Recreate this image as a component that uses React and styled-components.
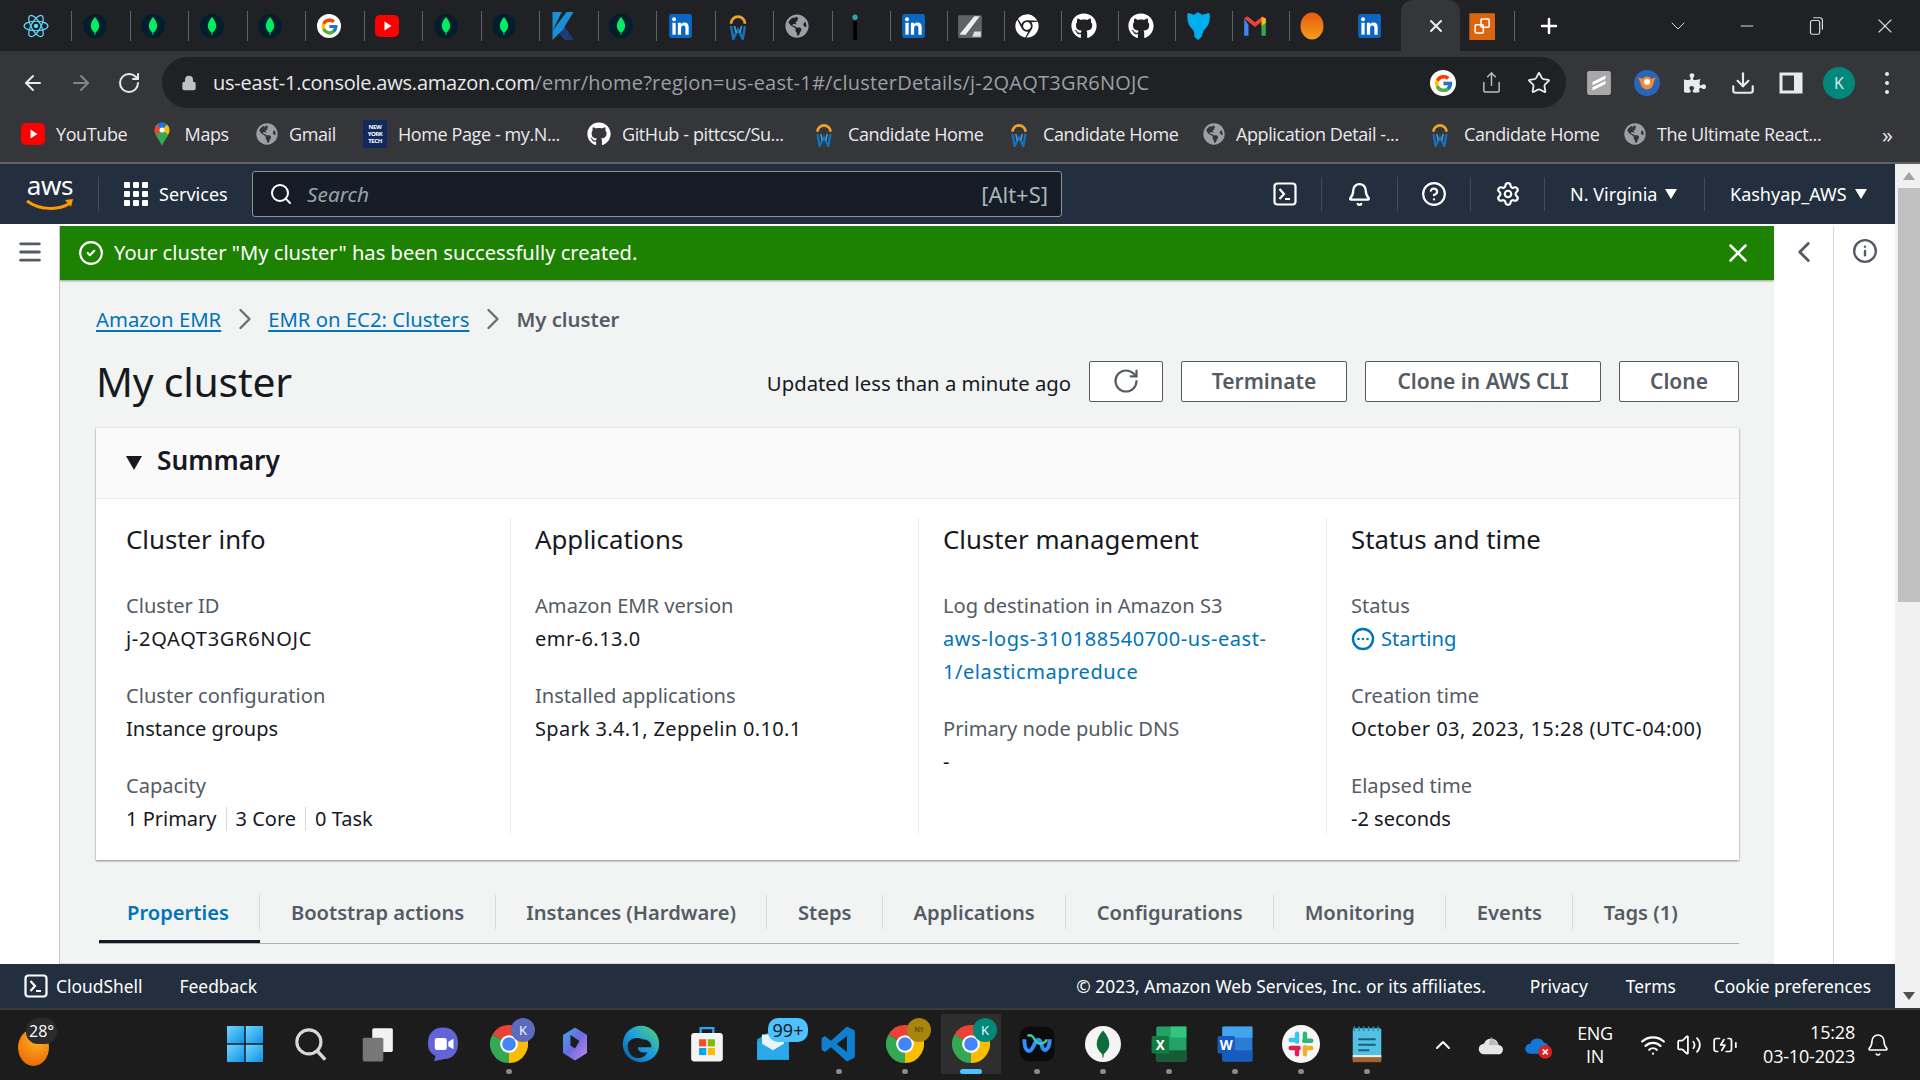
import React from "react";
import styled, { createGlobalStyle } from "styled-components";
import {
  ArrowLeft, ArrowRight, RotateCw, Lock, Star, Share, Download, Search, Bell, CircleHelp,
  Settings, ChevronLeft, ChevronRight, ChevronDown, Info, Menu, X, Plus, Minus, CircleCheck,
  Wifi, Volume2, ChevronUp, BatteryCharging,
} from "lucide-react";
import { FaGithub, FaGlobeAmericas, FaPuzzlePiece, FaChrome } from "react-icons/fa";
import { FcGoogle } from "react-icons/fc";

const Global = createGlobalStyle`
  html, body { margin: 0; padding: 0; width: 1920px; height: 1080px; overflow: hidden; }
  body { font-family: "Roboto", "Liberation Sans", sans-serif; }
  * { box-sizing: border-box; }
`;
const chromeFont = `"Open Sans", "Noto Sans", sans-serif`;
const emberFont = `"Noto Sans", "Open Sans", sans-serif`;

const Page = styled.div`width:1920px;height:1080px;display:flex;flex-direction:column;background:#202124;overflow:hidden;`;

/* tab strip */
const TabStrip = styled.div`height:51px;display:flex;align-items:flex-end;padding-left:13.5px;background:#202124;flex:none;`;
const Tab = styled.div`
  width:${p => p.$w}px;height:51px;display:flex;align-items:center;justify-content:center;padding-right:13px;
  position:relative;flex:none;
  &::after{content:"";position:absolute;right:0;top:11px;height:30px;width:1px;background:${p => p.$sep ? "#5f6368" : "transparent"};}
`;
const ActiveTab = styled.div`
  width:59px;height:51px;margin-left:-3px;padding-left:10px;background:#35363a;border-radius:12px 12px 0 0;display:flex;align-items:center;justify-content:center;color:#e8eaed;flex:none;
`;
const NewTab = styled.div`width:68px;display:flex;align-items:center;justify-content:center;color:#fff;height:51px;`;
const WinControls = styled.div`margin-left:auto;display:flex;height:51px;padding-right:1px;`;
const WinBtn = styled.div`width:69px;display:flex;align-items:center;justify-content:center;color:#dadce0;`;

/* toolbar */
const Toolbar = styled.div`height:64px;background:#35363a;display:flex;align-items:flex-start;padding:6px 0 0 9px;flex:none;`;
const ToolBtn = styled.div`width:48px;height:51px;display:flex;align-items:center;justify-content:center;color:${p => p.$dim ? "#80868b" : "#e8eaed"};flex:none;`;
const Address = styled.div`width:1404px;height:51px;margin:0 9px;background:#202124;border-radius:26px;display:flex;align-items:center;padding:0 3px 0 19px;flex:none;`;
const Url = styled.div`font:20px ${chromeFont};color:#9aa0a6;margin-left:16px;white-space:nowrap;letter-spacing:.23px;`;
const Host = styled.span`color:#e8eaed;letter-spacing:-.22px;`;
const AddressEnd = styled.div`margin-left:auto;display:flex;`;
const Avatar = styled.div`width:32px;height:32px;border-radius:50%;background:#00897b;color:#e8eaed;font:16px ${chromeFont};display:flex;align-items:center;justify-content:center;`;
const Dots = styled.div`display:flex;flex-direction:column;gap:5px;`;
const Dot = styled.i`width:4px;height:4px;border-radius:50%;background:#e8eaed;display:block;`;

/* bookmarks */
const Bookmarks = styled.div`height:47px;background:#35363a;display:flex;align-items:center;padding-left:21px;flex:none;padding-bottom:9px;`;
const Bookmark = styled.div`width:${p => p.$w}px;flex:none;display:flex;align-items:center;gap:11px;font:18px ${chromeFont};color:#e8eaed;white-space:nowrap;letter-spacing:-.4px;`;
const More = styled.div`margin-left:auto;margin-right:27px;color:#e8eaed;font:22px ${chromeFont};`;
const ChromeLine = styled.div`height:2px;background:#5f6368;flex:none;`;

/* console */
const Console = styled.div`flex:1;display:flex;min-height:0;background:#fff;`;
const ConsoleMain = styled.div`width:1895px;display:flex;flex-direction:column;`;
const Nav = styled.div`height:60px;background:#232f3e;display:flex;align-items:center;flex:none;color:#fff;font:18px ${emberFont};margin-bottom:2px;`;
const LogoWrap = styled.div`width:98px;padding-left:26px;flex:none;height:60px;display:flex;align-items:center;`;
const NavSep = styled.div`width:1px;height:34px;background:#414d5c;flex:none;`;
const Services = styled.div`display:flex;align-items:center;gap:11px;padding-left:25px;width:153px;flex:none;`;
const Grid9 = styled.div`display:grid;grid-template-columns:repeat(3,6px);gap:3px;`;
const Cell9 = styled.i`width:6px;height:6px;background:#fff;border-radius:1px;display:block;`;
const SearchBox = styled.div`width:810px;height:46px;background:#161d26;border:1px solid #879596;border-radius:3px;display:flex;align-items:center;padding:0 13px 0 16px;color:#d5dbdb;flex:none;`;
const SearchPh = styled.div`font:italic 20.8px ${emberFont};color:#95a5a6;margin-left:14px;`;
const SearchKey = styled.div`margin-left:auto;font:22px ${emberFont};color:#aab7b8;`;
const NavRight = styled.div`margin-left:auto;display:flex;align-items:center;`;
const NavCell = styled.div`width:${p => p.$w}px;height:34px;display:flex;align-items:center;justify-content:${p => p.$text ? "flex-start" : "center"};padding-left:${p => p.$text ? "25px" : "0"};gap:8px;border-right:${p => p.$last ? "0" : "1px solid #414d5c"};flex:none;white-space:nowrap;`;
const Caret = styled.i`width:0;height:0;border-left:6px solid transparent;border-right:6px solid transparent;border-top:10px solid #fff;display:block;`;

const Layout = styled.div`flex:1;min-height:0;display:flex;overflow:hidden;`;
const Rail = styled.div`width:${p => p.$w}px;flex:none;background:#fff;border-right:${p => p.$line ? "1px solid #d5dbdb" : "0"};display:flex;justify-content:center;padding-top:${p => p.$top}px;color:${p => p.$c};`;
const Middle = styled.div`flex:1;min-width:0;background:#f2f3f3;display:flex;flex-direction:column;overflow:hidden;border-left:1px solid #c5cbcc;border-bottom:1px solid #d5dbdb;margin-left:-1px;`;
const Flash = styled.div`height:54px;background:#1d8102;color:#fff;display:flex;align-items:center;padding:0 21px 0 18px;gap:10px;font:20.15px ${emberFont};flex:none;box-shadow:0 1px 2px rgba(0,28,36,.4);`;
const FlashText = styled.div`flex:1;padding-bottom:2px;`;
const Content = styled.div`padding:24px 35px 0 36px;`;
const Crumbs = styled.div`height:32px;display:flex;align-items:center;font:20.3px ${emberFont};color:#687078;padding-bottom:2px;`;
const Crumb = styled.a`color:#0073bb;text-decoration:underline;text-underline-offset:3px;`;
const CrumbNow = styled.span`font-weight:600;color:#545b64;`;
const CrumbSep = styled.span`display:flex;width:47px;justify-content:center;color:#687078;`;
const TitleRow = styled.div`margin-top:25px;height:41px;display:flex;align-items:center;`;
const Title = styled.h1`margin:0;font:400 40.8px ${emberFont};color:#16191f;flex:1;letter-spacing:-.2px;padding-bottom:2px;`;
const Updated = styled.div`font:20.3px ${emberFont};color:#16191f;margin-right:18px;padding-top:2px;`;
const Btn = styled.button`
  width:${p => p.$w}px;height:41px;margin-left:${p => p.$ml || 0}px;background:#fff;border:1px solid #545b64;border-radius:2px;color:#545b64;
  font:600 21px ${emberFont};display:flex;align-items:center;justify-content:center;padding:0 0 1px;flex:none;
`;
const Card = styled.section`margin-top:26px;background:#fff;box-shadow:0 1px 2px rgba(0,28,36,.45),0 0 1px rgba(0,28,36,.2);`;
const CardHead = styled.div`height:71px;background:#fafafa;border-bottom:1px solid #eaeded;display:flex;align-items:center;padding:0 0 0 30px;gap:15px;`;
const Tri = styled.i`width:0;height:0;border-left:8px solid transparent;border-right:8px solid transparent;border-top:14px solid #16191f;display:block;`;
const CardTitle = styled.h2`margin:0;font:600 26.3px ${emberFont};color:#16191f;padding-bottom:6px;`;
const CardBody = styled.div`display:grid;grid-template-columns:384px 408px 408px 1fr;padding:19px 30px 25px;`;
const Col = styled.div`padding-left:${p => p.$first ? 0 : 24}px;border-left:${p => p.$first ? 0 : "1px solid #eaeded"};`;
const ColTitle = styled.h3`margin:0 0 29px;font:400 25.8px/42px ${emberFont};color:#16191f;`;
const Field = styled.div`margin-bottom:24px;&:last-child{margin-bottom:0;}`;
const Label = styled.div`font:20.1px/33px ${emberFont};color:#545b64;`;
const Value = styled.div`font:20px/33px ${emberFont};color:#16191f;display:flex;align-items:center;min-height:33px;letter-spacing:${p => p.$ls || 0}px;`;
const Link = styled.div`font:20px/33px ${emberFont};color:#0073bb;max-width:350px;letter-spacing:.57px;`;
const Status = styled.div`font:20.2px/33px ${emberFont};color:#0073bb;display:flex;align-items:center;gap:6px;`;
const Capacity = styled.span`padding-right:9px;margin-right:9px;border-right:1px solid #d5dbdb;line-height:24px;&:last-child{border:0;}`;
const Tabs = styled.div`margin:21px 0 0 3px;height:63px;display:flex;border-bottom:1px solid #aab7b8;`;
const TabItem = styled.div`height:62px;display:flex;align-items:center;border-bottom:${p => p.$active ? "3px solid #16191f" : "0"};padding-top:${p => p.$active ? "3px" : 0};`;
const TabLabel = styled.div`font:600 20.15px/34px ${emberFont};color:${p => p.$active ? "#0073bb" : "#545b64"};padding:0 30.5px 0 ${p => p.$active ? 28 : 30.5}px;border-right:${p => p.$last ? 0 : "1px solid #d5dbdb"};white-space:nowrap;`;

const Footer = styled.div`height:44px;background:#232f3e;color:#fff;display:flex;align-items:center;padding:0 24px;font:17.4px ${emberFont};flex:none;`;
const FootLink = styled.span`margin-left:${p => p.$ml}px;white-space:nowrap;`;
const FootRight = styled.div`margin-left:auto;display:flex;`;

const Scroll = styled.div`width:25px;background:#f1f1f1;flex:none;display:flex;flex-direction:column;align-items:flex-end;`;
const ScrollArrow = styled.div`height:24px;width:22px;flex:none;display:flex;align-items:center;justify-content:center;`;
const ScrollTri = styled.i`width:0;height:0;border-left:6px solid transparent;border-right:6px solid transparent;${p => p.$up ? "border-bottom:8px solid #a3a3a3;" : "border-top:8px solid #505050;"}display:block;`;
const Thumb = styled.div`width:22px;height:414px;background:#c1c1c1;`;
const Spacer = styled.div`flex:1;`;

/* taskbar */
const Taskbar = styled.div`height:72px;background:#1c1c1c;border-top:2px solid #3a3a3a;display:flex;align-items:center;flex:none;color:#fff;font:18px ${chromeFont};`;
const Weather = styled.div`width:212px;flex:none;padding-left:18px;position:relative;height:50px;display:flex;align-items:center;`;
const WeatherBall = styled.div`width:31px;height:37px;border-radius:50%;background:radial-gradient(circle at 60% 30%,#ffb020,#e65c00);margin-top:4px;`;
const WeatherBadge = styled.div`position:absolute;left:26px;top:-2px;padding:0 3px;height:26px;border-radius:12px;background:#2b2b2b;font:16px/26px ${chromeFont};`;
const Apps = styled.div`display:flex;height:100%;`;
const AppCell = styled.div`
  width:66px;height:100%;display:flex;flex-direction:column;align-items:center;justify-content:center;position:relative;padding-bottom:2px;
  background:${p => p.$active ? "linear-gradient(#2e2e2e,#2e2e2e) center 4px / 60px 60px no-repeat" : "none"};
`;
const AppMark = styled.i`position:absolute;bottom:6px;left:50%;transform:translateX(-50%);height:5px;width:${p => p.$active ? 22 : 6}px;border-radius:3px;background:${p => p.$active ? "#4cc2ff" : "#8a8a8a"};display:block;`;
const AppBadge = styled.div`position:absolute;top:${p => p.$top || 8}px;left:${p => p.$left}px;min-width:${p => p.$size || 40}px;height:${p => p.$size || 24}px;border-radius:${p => p.$size ? "50%" : "10px"};background:${p => p.$bg};color:${p => p.$c || "#fff"};font:${p => p.$fs || 14}px/${p => p.$size || 24}px ${chromeFont};text-align:center;`;
const Tray = styled.div`display:flex;align-items:center;margin-left:19px;height:100%;`;
const TrayIcon = styled.div`width:${p => p.$w}px;display:flex;justify-content:center;flex:none;color:#fff;`;
const Lang = styled.div`width:64px;margin-right:8px;text-align:center;font:18px/23px ${chromeFont};flex:none;letter-spacing:-.3px;`;
const Clock = styled.div`width:106px;text-align:right;font:18px/24px ${chromeFont};margin-left:6px;flex:none;letter-spacing:-.2px;padding-bottom:2px;`;

/* icon drawings */
const Svg = ({ s = 24, children, vb = "0 0 24 24" }) => <svg width={s} height={s} viewBox={vb}>{children}</svg>;
const ReactLogo = () => (
  <Svg s={26}><g fill="none" stroke="#61dafb" strokeWidth="1.1"><ellipse cx="12" cy="12" rx="11" ry="4.4" /><ellipse cx="12" cy="12" rx="11" ry="4.4" transform="rotate(60 12 12)" /><ellipse cx="12" cy="12" rx="11" ry="4.4" transform="rotate(120 12 12)" /></g><circle cx="12" cy="12" r="2" fill="#61dafb" /></Svg>
);
const Mongo = ({ s = 24, bg = "#001e2b", c = "#00ed64" }) => (
  <Svg s={s}><circle cx="12" cy="12" r="12" fill={bg} /><path d="M12 3c2.6 3 4.2 5.8 4.2 9 0 3.2-2.2 5.4-3.6 6.6l-.4 2.6h-.5l-.3-2.6C10 17.400 7.800 15.200 7.800 12c0-3.200 1.600-6 4.200-9z" fill={c} /></Svg>
);
const YT = ({ s = 24 }) => (
  <Svg s={s}><rect x="0" y="1" width="24" height="22" rx="5" fill="#f00" /><path d="M9.500 7.500l7 4.500-7 4.500z" fill="#fff" /></Svg>
);
const GoogleRound = ({ s = 24 }) => (
  <svg width={s} height={s} viewBox="0 0 24 24"><circle cx="12" cy="12" r="12" fill="#fff" /><foreignObject x="2.500" y="2.500" width="19" height="19"><FcGoogle size={19} /></foreignObject></svg>
);
const KLogo = () => (
  <Svg s={28}><path d="M3 0h8L3 16z" fill="#1a8fd6" /><path d="M15 0L3 16v8l6-6 5 6h7L13 13l8-13z" fill="#1a8fd6" /><path d="M9 18l5-5 7 11h-7z" fill="#1f3a7a" /></Svg>
);
const LinkedIn = () => (
  <Svg s={26} ><rect x="2" y="1" width="21" height="22" rx="2" fill="#0a66c2" /><rect x="5" y="9" width="3" height="11" fill="#fff" /><circle cx="6.500" cy="5.800" r="1.800" fill="#fff" /><path d="M10 9h3v1.600c.7-1.200 1.800-1.800 3.200-1.800 2.600 0 3.800 1.600 3.800 4.400V20h-3v-6c0-1.600-.6-2.500-1.900-2.500S13 12.500 13 14v6h-3z" fill="#fff" /></Svg>
);
const Workday = ({ s = 26 }) => (
  <Svg s={s}><path d="M6 10a6 6 0 0 1 12 0" fill="none" stroke="#f0a12b" strokeWidth="2.400" /><path d="M6 12l2 11 4-8 4 8 2-11" fill="none" stroke="#1471b8" strokeWidth="2.200" /><path d="M9 12l1.500 6M15 12l-1.500 6" stroke="#4a9bd4" strokeWidth="1.400" /></Svg>
);
const Globe = ({ s = 22 }) => <FaGlobeAmericas size={s} color="#9aa0a6" />;
const IBar = () => (
  <Svg s={28}><circle cx="12" cy="4.500" r="2.300" fill="#2aa4ad" /><rect x="10.500" y="8" width="3.200" height="18" fill="#000" /></Svg>
);
const Pen = () => (
  <Svg s={26}><rect x="1" y="2" width="22" height="21" rx="1" fill="#5f6368" /><path d="M3 19L16 3h5L8 20H3z" fill="#eee" /><path d="M16 17h6v5h-8z" fill="#ddd" /></Svg>
);
const Barclays = () => (
  <Svg s={28}><path d="M12 0c1 1.500 3 1 3.500 2.500C18 1.500 20 1 22 1c.6 5-.4 9.500-3 12.500-1 1.200-2.200 2-2.600 3.500l-1.400 4.500-3 2.500-3-2.500L8.600 17c-.4-1.500-1.600-2.300-2.600-3.500C3.400 10.500 2.400 6 3 1c2 0 4 .5 5.500 1.500C9 1 11 1.500 12 0z" fill="#00aeef" /></Svg>
);
const Gmail = () => (
  <Svg s={26}><path d="M2 5v16h4V11z" fill="#4285f4" /><path d="M22 5v16h-4V11z" fill="#34a853" /><path d="M2 5l10 8 10-8-3-2-7 5.500L5 3z" fill="#ea4335" /><path d="M18 4l4 1v4l-4 3z" fill="#fbbc04" /></Svg>
);
const OrangeBall = () => <svg width="24" height="28" viewBox="0 0 24 28"><defs><linearGradient id="ob" x1="0" y1="0" x2="0" y2="1"><stop offset="0" stopColor="#e8590c" /><stop offset="1" stopColor="#f59f1a" /></linearGradient></defs><ellipse cx="12" cy="14" rx="11.500" ry="13.500" fill="url(#ob)" /></svg>;
const AwsTab = () => (
  <Svg s={28}><rect x="2" y="1" width="22" height="24" rx="1" fill="#d9660f" /><g fill="none" stroke="#fff" strokeWidth="1.300"><rect x="12" y="6" width="7" height="7" rx="1" /><rect x="7" y="11" width="7" height="7" rx="1" /></g></Svg>
);
const Restore = () => (
  <Svg s={22}><g fill="none" stroke="#dadce0" strokeWidth="1.300"><rect x="6" y="6" width="10" height="15" rx="2" /><path d="M9 3h7a3 3 0 0 1 3 3v10" /></g></Svg>
);
const AwsLogo = () => (
  <svg width="48" height="60" viewBox="0 0 48 60">
    <text x="24" y="31" textAnchor="middle" fontFamily="Noto Sans, sans-serif" fontSize="26" fill="#fff" letterSpacing="-.4">aws</text>
    <path d="M1 37c12 9 32 10 43 2" fill="none" stroke="#f90" strokeWidth="3" /><path d="M39 36l8-1-2 8z" fill="#f90" />
  </svg>
);
const Term = ({ s = 24 }) => (
  <svg width={s} height={s} viewBox="0 0 24 24"><rect x="1.500" y="1.500" width="21" height="21" rx="3" fill="none" stroke="#fff" strokeWidth="2.200" /><path d="M6.500 7l4.500 5-4.500 5M12 17h5" fill="none" stroke="#fff" strokeWidth="2.200" /></svg>
);
const Chrome = ({ s = 38 }) => (
  <Svg s={s}><path d="M12 12L1.600 6A12 12 0 0 1 22.400 6Z" fill="#ea4335" /><path d="M12 12L22.400 6A12 12 0 0 1 12 24Z" fill="#fbbc04" /><path d="M12 12L12 24A12 12 0 0 1 1.600 6Z" fill="#34a853" /><circle cx="12" cy="12" r="5.600" fill="#fff" /><circle cx="12" cy="12" r="4.300" fill="#4285f4" /></Svg>
);
const Win11 = () => (
  <Svg s={36}><defs><linearGradient id="wn" x1="0" y1="0" x2="1" y2="1"><stop offset="0" stopColor="#6fd6fb" /><stop offset="1" stopColor="#0f8fe8" /></linearGradient></defs><g fill="url(#wn)"><rect x="0" y="0" width="11.500" height="11.500" /><rect x="12.500" y="0" width="11.500" height="11.500" /><rect x="0" y="12.500" width="11.500" height="11.500" /><rect x="12.500" y="12.500" width="11.500" height="11.500" /></g></Svg>
);
const SearchTb = () => (
  <Svg s={34}><circle cx="10.500" cy="10.500" r="8.500" fill="none" stroke="#d8d8d8" strokeWidth="2.200" /><path d="M16.500 17l5.500 6" stroke="#d8d8d8" strokeWidth="2.500" /></Svg>
);
const TaskView = () => (
  <Svg s={38}><rect x="9" y="2" width="13" height="15" rx="1" fill="#f2f2f2" /><rect x="3" y="8" width="13" height="15" rx="1" fill="#777" /></Svg>
);
const Teams = () => (
  <Svg s={36}><path d="M12 1c6 0 10 4 10 10v1c0 6-4 10-9 10l-7 1.500 1-3.500C3 18 2 15 2 12v-1C2 5 6 1 12 1z" fill="#6264d8" /><rect x="6.500" y="8" width="8" height="8" rx="1.500" fill="#fff" /><path d="M15.500 10.500L19 8.500v7l-3.500-2z" fill="#fff" /></Svg>
);
const Copilot = () => (
  <Svg s={36}><defs><linearGradient id="cp" x1="0" y1="0" x2="1" y2="1"><stop offset="0" stopColor="#3fa5e8" /><stop offset=".5" stopColor="#6c6ce0" /><stop offset="1" stopColor="#c58ae8" /></linearGradient></defs><path d="M12 1l8 5v12l-8 5-8-5V6z" fill="url(#cp)" /><path d="M9 6l6 4-3 5-3-2z" fill="#1c1c1c" /></Svg>
);
const Edge = () => (
  <Svg s={38}><defs><linearGradient id="ed" x1="0" y1="1" x2="1" y2="0"><stop offset="0" stopColor="#0c59a4" /><stop offset=".5" stopColor="#1b9de2" /><stop offset="1" stopColor="#54d66c" /></linearGradient></defs><circle cx="12" cy="12" r="11.500" fill="url(#ed)" /><path d="M13 9c3 0 6 2 5.500 5H10c0 3 3 4 6 3-1 3-5 5-9 3C4 18 3 14 4 11c2-3 6-3.500 9-2z" fill="#1c1c1c" /></Svg>
);
const Store = () => (
  <Svg s={38}><path d="M8 5V2h8v3" fill="none" stroke="#2aa4f4" strokeWidth="1.500" /><rect x="2" y="5" width="20" height="18" rx="2" fill="#f4f4f4" /><rect x="7" y="9" width="4.500" height="4.500" fill="#f25022" /><rect x="12.500" y="9" width="4.500" height="4.500" fill="#7fba00" /><rect x="7" y="14.500" width="4.500" height="4.500" fill="#00a4ef" /><rect x="12.500" y="14.500" width="4.500" height="4.500" fill="#ffb900" /></Svg>
);
const Mail = () => (
  <Svg s={38}><path d="M2 9l10-6 10 6v13H2z" fill="#1b9de2" /><path d="M5 6h14v8l-7 4-7-4z" fill="#e6f4fb" /><path d="M2 10l10 6 10-6v12H2z" fill="#2aa9ea" /></Svg>
);
const VsCode = () => (
  <Svg s={38}><path d="M17 1l5 2.500v17L17 23 7 14l-4 3-2-1.500v-7L3 7l4 3z" fill="#0f7fcf" /><path d="M17 7l-6.500 5L17 17z" fill="#1c1c1c" /></Svg>
);
const Webex = () => (
  <Svg s={38}><rect x="1" y="1" width="22" height="22" rx="6" fill="#0b0b0b" /><path d="M4 9c0 9 4 9 6 4s4-5 5 0 5 3 5-4" fill="none" stroke="#2f8fff" strokeWidth="2.500" /><path d="M6 7c3-2 4 2 6 4s6 0 6-2" fill="none" stroke="#3bd0a0" strokeWidth="1.500" /></Svg>
);
const Excel = () => (
  <Svg s={38}><rect x="4" y="1" width="19" height="22" rx="1" fill="#21a366" /><rect x="13" y="1" width="10" height="7" fill="#33c481" /><rect x="4" y="16" width="19" height="7" fill="#185c37" /><rect x="1" y="7" width="11" height="11" rx="1" fill="#107c41" /><text x="6.500" y="15.800" fill="#fff" fontFamily="Noto Sans, sans-serif" fontWeight="700" fontSize="8.500" textAnchor="middle">X</text></Svg>
);
const Word = () => (
  <Svg s={38}><rect x="4" y="1" width="19" height="22" rx="1" fill="#2b7cd3" /><rect x="4" y="1" width="19" height="7" fill="#41a5ee" /><rect x="4" y="16" width="19" height="7" fill="#185abd" /><rect x="1" y="7" width="11" height="11" rx="1" fill="#185abd" /><text x="6.500" y="15.800" fill="#fff" fontFamily="Noto Sans, sans-serif" fontWeight="700" fontSize="8.500" textAnchor="middle">W</text></Svg>
);
const Slack = () => (
  <Svg s={38}><circle cx="12" cy="12" r="12" fill="#f7f7f7" /><g strokeWidth="2.800" strokeLinecap="round"><path d="M9.500 5.500v5" stroke="#36c5f0" /><path d="M5.500 9.500h3" stroke="#36c5f0" /><path d="M18.500 10h-4.500" stroke="#2eb67d" /><path d="M14.500 5.500v3" stroke="#2eb67d" /><path d="M14.500 18.500v-4.500" stroke="#ecb22e" /><path d="M18.500 14.500h-3" stroke="#ecb22e" /><path d="M5.500 14.500h5" stroke="#e01e5a" /><path d="M9.500 18.500v-2.500" stroke="#e01e5a" /></g></Svg>
);
const Notepad = () => (
  <Svg s={38}><rect x="3" y="2" width="18" height="21" rx="1" fill="#53c1e3" /><rect x="3" y="20" width="18" height="3.500" fill="#a5622a" /><rect x="3" y="19" width="18" height="1.300" fill="#eee" /><path d="M6.500 9h11M6.500 12.500h11M6.500 16h7" stroke="#17607f" strokeWidth="1.300" /><path d="M4 1v3M7 1v3M10 1v3M13 1v3M16 1v3M19 1v3" stroke="#2a93b8" strokeWidth="1" /></Svg>
);
const CloudTray = () => (
  <Svg s={28}><path d="M6 20a4.500 4.500 0 0 1 0-9 6.500 6.500 0 0 1 12.500 1A4 4 0 0 1 18 20z" fill="#e6e6e6" /><path d="M12 5l7 7h-9z" fill="#aaa" opacity=".7" /></Svg>
);
const OneDriveErr = () => (
  <Svg s={30}><path d="M5 19a4 4 0 0 1 0-8 6 6 0 0 1 11-1 4 4 0 0 1 3 6v3z" fill="#1277d6" /><circle cx="17" cy="17.500" r="5.500" fill="#e02020" /><path d="M15 15.500l4 4M19 15.500l-4 4" stroke="#fff" strokeWidth="1.300" /></Svg>
);
const SideP = () => (
  <Svg s={24}><rect x="2" y="3" width="20" height="18" fill="none" stroke="#e8eaed" strokeWidth="3" /><rect x="15" y="3" width="7" height="18" fill="#e8eaed" /></Svg>
);
const ExtStripe = () => (
  <Svg s={26}><rect x="1" y="1" width="22" height="22" rx="2" fill="#a8a8a8" /><path d="M6 11l12-6v3L6 14zM6 16l12-6v3L6 19z" fill="#fff" /></Svg>
);
const ExtFace = () => (
  <Svg s={26}><circle cx="12" cy="12" r="12" fill="#2a66b8" /><path d="M4 7l4 1a5 5 0 0 1 8 0l4-1-2 5a6 6 0 0 1-12 0z" fill="#f28a2e" /><circle cx="12" cy="11" r="2.800" fill="#fff" /></Svg>
);
const StatusDots = () => (
  <Svg s={24}><circle cx="12" cy="12" r="10" fill="none" stroke="#0073bb" strokeWidth="2.400" /><circle cx="7.500" cy="12" r="1.300" fill="#0073bb" /><circle cx="12" cy="12" r="1.300" fill="#0073bb" /><circle cx="16.500" cy="12" r="1.300" fill="#0073bb" /></Svg>
);
function MapsPin() {
  return <Svg s={24}><path d="M12 24C9 17 4.500 13.500 4.500 8a7.500 7.500 0 0 1 15 0C19.500 13.500 15 17 12 24z" fill="#34a853" /><path d="M7 2.500a7.500 7.500 0 0 1 10 0L12 8z" fill="#1a73e8" /><path d="M4.500 8A7.500 7.500 0 0 1 7 2.500L12 8l-5.500 5c-1-1.500-2-3-2-5z" fill="#ea4335" /><path d="M19.500 8c0 1.500-.5 3-1.500 4.500L12 8l5-5.500A7.500 7.500 0 0 1 19.500 8z" fill="#fbbc04" /><circle cx="12" cy="8" r="2.500" fill="#fff" /></Svg>;
}
function NYT() {
  return <svg width="24" height="28" viewBox="0 0 24 28"><rect width="24" height="28" fill="#13295e" /><text x="12" y="9" fill="#fff" fontSize="6" fontFamily="Noto Sans, sans-serif" fontWeight="700" textAnchor="middle">NEW</text><text x="12" y="16" fill="#fff" fontSize="6" fontFamily="Noto Sans, sans-serif" fontWeight="700" textAnchor="middle">YORK</text><text x="12" y="23" fill="#fff" fontSize="6" fontFamily="Noto Sans, sans-serif" fontWeight="700" textAnchor="middle">TECH</text></svg>;
}

const tabIcons = [
  <ReactLogo />, <Mongo />, <Mongo />, <Mongo />, <Mongo />, <GoogleRound />, <YT />, <Mongo />, <Mongo />, <KLogo />, <Mongo />,
  <LinkedIn />, <Workday s={28} />, <Globe s={24} />, <IBar />, <LinkedIn />, <Pen />, <FaChrome size={24} color="#fff" />,
  <FaGithub size={26} color="#fff" />, <FaGithub size={26} color="#fff" />, <Barclays />, <Gmail />, <OrangeBall />, <LinkedIn />,
];
const bookmarks = [
  [<YT s={24} />, "YouTube", 128.6], [<MapsPin />, "Maps", 106.4], [<Globe />, "Gmail", 107], [<NYT />, "Home Page - my.N...", 224],
  [<FaGithub size={24} color="#fff" />, "GitHub - pittcsc/Su...", 224], [<Workday />, "Candidate Home", 195], [<Workday />, "Candidate Home", 197],
  [<Globe />, "Application Detail -...", 224], [<Workday />, "Candidate Home", 197], [<Globe />, "The Ultimate React...", 200],
];

const columns = [
  { t: "Cluster info", f: [["Cluster ID", "j-2QAQT3GR6NOJC", .7], ["Cluster configuration", "Instance groups"], ["Capacity", "cap"]] },
  { t: "Applications", f: [["Amazon EMR version", "emr-6.13.0", .45], ["Installed applications", "Spark 3.4.1, Zeppelin 0.10.1", .33]] },
  { t: "Cluster management", f: [["Log destination in Amazon S3", "link"], ["Primary node public DNS", "-"]] },
  { t: "Status and time", f: [["Status", "status"], ["Creation time", "October 03, 2023, 15:28 (UTC-04:00)", .45], ["Elapsed time", "-2 seconds"]] },
];
const renderValue = (v, ls) => {
  if (v === "cap") return <Value><Capacity>1 Primary</Capacity><Capacity>3 Core</Capacity><Capacity>0 Task</Capacity></Value>;
  if (v === "link") return <Link>aws-logs-310188540700-us-east-1/elasticmapreduce</Link>;
  if (v === "status") return <Status><StatusDots />Starting</Status>;
  return <Value $ls={ls}>{v}</Value>;
};
const tabNames = ["Properties", "Bootstrap actions", "Instances (Hardware)", "Steps", "Applications", "Configurations", "Monitoring", "Events", "Tags (1)"];
const apps = [
  [<Win11 />], [<SearchTb />], [<TaskView />], [<Teams />], [<Chrome />, { dot: 1, badge: <AppBadge $left={35} $size={24} $bg="#5c6bc0" $fs={13}>K</AppBadge> }],
  [<Copilot />], [<Edge />], [<Store />], [<Mail />, { badge: <AppBadge $left={28} $bg="#4cc2ff" $c="#111" $fs={18}>99+</AppBadge> }],
  [<VsCode />, { dot: 1 }], [<Chrome />, { dot: 1, badge: <AppBadge $left={35} $size={24} $bg="#a8860c" $c="#222" $fs={7}>NY</AppBadge> }],
  [<Chrome />, { active: 1, badge: <AppBadge $left={35} $size={24} $bg="#00897b" $fs={13}>K</AppBadge> }],
  [<Webex />, { dot: 1 }], [<Mongo s={36} bg="#f4f4f4" c="#0d6b3c" />, { dot: 1 }], [<Excel />, { dot: 1 }], [<Word />, { dot: 1 }], [<Slack />, { dot: 1 }], [<Notepad />, { dot: 1 }],
];

export default function App() {
  return (
    <Page>
      <Global />
      <TabStrip>
        {tabIcons.map((ic, i) => <Tab key={i} $w={i < 15 ? 58.5 : 57} $sep={i < 23 && i !== 22}>{ic}</Tab>)}
        <ActiveTab><X size={20} strokeWidth={2.5} /></ActiveTab>
        <Tab $w={55} $sep><AwsTab /></Tab>
        <NewTab><Plus size={24} strokeWidth={2.5} /></NewTab>
        <WinControls>
          <WinBtn><ChevronDown size={24} strokeWidth={1} /></WinBtn>
          <WinBtn><Minus size={20} strokeWidth={1.2} /></WinBtn>
          <WinBtn><Restore /></WinBtn>
          <WinBtn><X size={24} strokeWidth={1.1} /></WinBtn>
        </WinControls>
      </TabStrip>
      <Toolbar>
        <ToolBtn><ArrowLeft size={24} strokeWidth={2} /></ToolBtn>
        <ToolBtn $dim><ArrowRight size={24} strokeWidth={2} /></ToolBtn>
        <ToolBtn><RotateCw size={24} strokeWidth={2} /></ToolBtn>
        <Address>
          <Lock size={16} color="#bdc1c6" fill="#bdc1c6" />
          <Url><Host>us-east-1.console.aws.amazon.com</Host>/emr/home?region=us-east-1#/clusterDetails/j-2QAQT3GR6NOJC</Url>
          <AddressEnd>
            <ToolBtn><GoogleRound s={26} /></ToolBtn>
            <ToolBtn><Share size={23} strokeWidth={1.5} color="#bdc1c6" /></ToolBtn>
            <ToolBtn><Star size={24} strokeWidth={1.8} /></ToolBtn>
          </AddressEnd>
        </Address>
        <ToolBtn><ExtStripe /></ToolBtn>
        <ToolBtn><ExtFace /></ToolBtn>
        <ToolBtn><FaPuzzlePiece size={22} color="#e8eaed" /></ToolBtn>
        <ToolBtn><Download size={26} strokeWidth={2} /></ToolBtn>
        <ToolBtn><SideP /></ToolBtn>
        <ToolBtn><Avatar>K</Avatar></ToolBtn>
        <ToolBtn><Dots><Dot /><Dot /><Dot /></Dots></ToolBtn>
      </Toolbar>
      <Bookmarks>
        {bookmarks.map(([ic, t, w], i) => <Bookmark key={i} $w={w}>{ic}{t}</Bookmark>)}
        <More>»</More>
      </Bookmarks>
      <ChromeLine />
      <Console>
        <ConsoleMain>
          <Nav>
            <LogoWrap><AwsLogo /></LogoWrap>
            <NavSep />
            <Services><Grid9>{Array.from({ length: 9 }, (_, i) => <Cell9 key={i} />)}</Grid9>Services</Services>
            <SearchBox><Search size={24} color="#fff" strokeWidth={2} /><SearchPh>Search</SearchPh><SearchKey>[Alt+S]</SearchKey></SearchBox>
            <NavRight>
              <NavCell $w={74}><Term /></NavCell>
              <NavCell $w={76}><Bell size={25} strokeWidth={2.2} /></NavCell>
              <NavCell $w={73}><CircleHelp size={26} strokeWidth={2} /></NavCell>
              <NavCell $w={74}><Settings size={26} strokeWidth={2} /></NavCell>
              <NavCell $w={160} $text>N. Virginia<Caret /></NavCell>
              <NavCell $w={190} $text $last>Kashyap_AWS<Caret /></NavCell>
            </NavRight>
          </Nav>
          <Layout>
            <Rail $w={60} $top={12} $c="#545b64"><Menu size={28} strokeWidth={2.4} /></Rail>
            <Middle>
              <Flash>
                <CircleCheck size={26} strokeWidth={2} />
                <FlashText>Your cluster "My cluster" has been successfully created.</FlashText>
                <X size={30} strokeWidth={2} />
              </Flash>
              <Content>
                <Crumbs>
                  <Crumb>Amazon EMR</Crumb><CrumbSep><ChevronRight size={36} strokeWidth={1.6} /></CrumbSep>
                  <Crumb>EMR on EC2: Clusters</Crumb><CrumbSep><ChevronRight size={36} strokeWidth={1.6} /></CrumbSep>
                  <CrumbNow>My cluster</CrumbNow>
                </Crumbs>
                <TitleRow>
                  <Title>My cluster</Title>
                  <Updated>Updated less than a minute ago</Updated>
                  <Btn $w={74}><RotateCw size={28} strokeWidth={1.9} /></Btn>
                  <Btn $w={166} $ml={18}>Terminate</Btn>
                  <Btn $w={236} $ml={18}>Clone in AWS CLI</Btn>
                  <Btn $w={120} $ml={18}>Clone</Btn>
                </TitleRow>
                <Card>
                  <CardHead><Tri /><CardTitle>Summary</CardTitle></CardHead>
                  <CardBody>
                    {columns.map((c, i) => (
                      <Col key={c.t} $first={i === 0}>
                        <ColTitle>{c.t}</ColTitle>
                        {c.f.map(([l, v, ls]) => <Field key={l}><Label>{l}</Label>{renderValue(v, ls)}</Field>)}
                      </Col>
                    ))}
                  </CardBody>
                </Card>
                <Tabs>
                  {tabNames.map((t, i) => <TabItem key={t} $active={i === 0}><TabLabel $active={i === 0} $last={i === 8}>{t}</TabLabel></TabItem>)}
                </Tabs>
              </Content>
            </Middle>
            <Rail $w={60} $top={9} $line $c="#545b64"><ChevronLeft size={34} strokeWidth={2} /></Rail>
            <Rail $w={61} $top={12} $c="#545b64"><Info size={26} strokeWidth={2.2} /></Rail>
          </Layout>
          <Footer>
            <Term s={24} /><FootLink $ml={8}>CloudShell</FootLink><FootLink $ml={37}>Feedback</FootLink>
            <FootRight>
              <FootLink $ml={0}>© 2023, Amazon Web Services, Inc. or its affiliates.</FootLink>
              <FootLink $ml={44}>Privacy</FootLink>
              <FootLink $ml={38}>Terms</FootLink>
              <FootLink $ml={38}>Cookie preferences</FootLink>
            </FootRight>
          </Footer>
        </ConsoleMain>
        <Scroll>
          <ScrollArrow><ScrollTri $up /></ScrollArrow>
          <Thumb />
          <Spacer />
          <ScrollArrow><ScrollTri /></ScrollArrow>
        </Scroll>
      </Console>
      <Taskbar>
        <Weather><WeatherBall /><WeatherBadge>28°</WeatherBadge></Weather>
        <Apps>
          {apps.map(([ic, o = {}], i) => (
            <AppCell key={i} $active={o.active}>
              {ic}
              {o.badge}
              {(o.dot || o.active) && <AppMark $active={o.active} />}
            </AppCell>
          ))}
        </Apps>
        <Tray>
          <TrayIcon $w={48}><ChevronUp size={24} strokeWidth={2} /></TrayIcon>
          <TrayIcon $w={48}><CloudTray /></TrayIcon>
          <TrayIcon $w={48}><OneDriveErr /></TrayIcon>
          <Lang>ENG<br />IN</Lang>
          <TrayIcon $w={36}><Wifi size={26} strokeWidth={2} /></TrayIcon>
          <TrayIcon $w={36}><Volume2 size={26} strokeWidth={1.6} /></TrayIcon>
          <TrayIcon $w={36}><BatteryCharging size={26} strokeWidth={1.6} /></TrayIcon>
          <Clock>15:28<br />03-10-2023</Clock>
          <TrayIcon $w={46}><Bell size={24} strokeWidth={1.6} /></TrayIcon>
        </Tray>
      </Taskbar>
    </Page>
  );
}
